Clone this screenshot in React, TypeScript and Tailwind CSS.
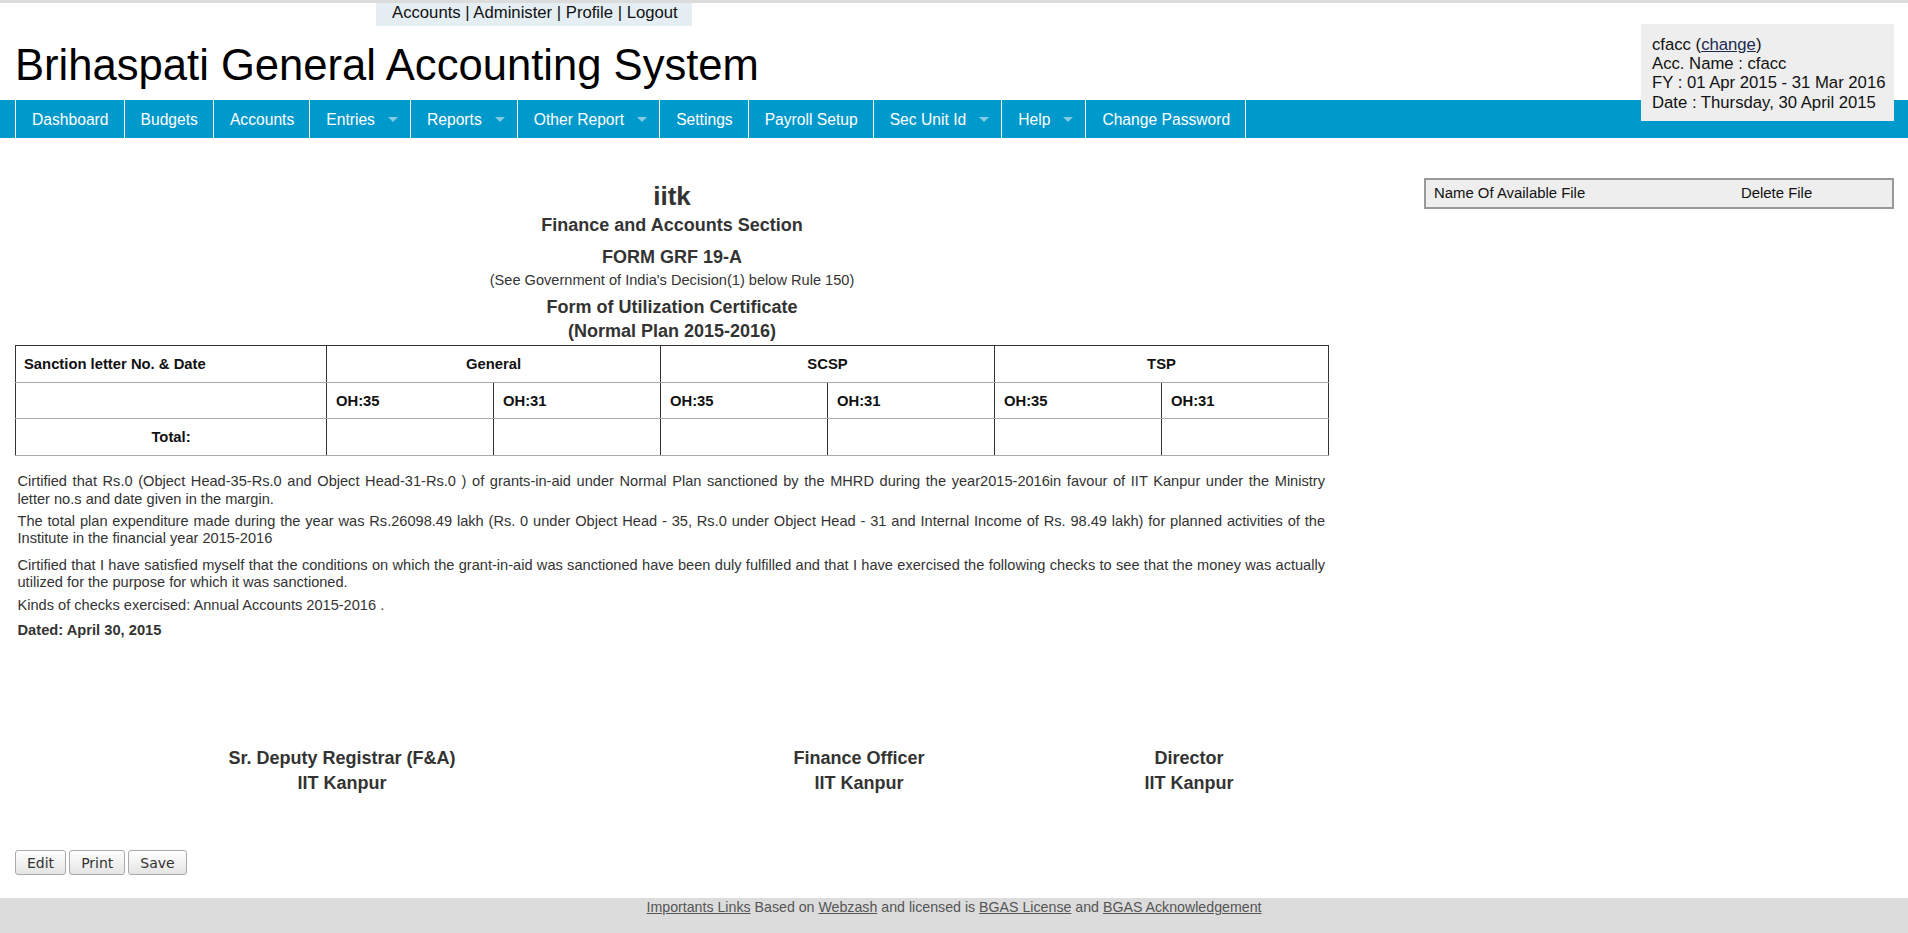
import React from "react";

const navItems: { label: string; arrow?: boolean }[] = [
  { label: "Dashboard" },
  { label: "Budgets" },
  { label: "Accounts" },
  { label: "Entries", arrow: true },
  { label: "Reports", arrow: true },
  { label: "Other Report", arrow: true },
  { label: "Settings" },
  { label: "Payroll Setup" },
  { label: "Sec Unit Id", arrow: true },
  { label: "Help", arrow: true },
  { label: "Change Password" },
];

const cellBase =
  "border border-x-[#333] border-y-[#aaa] h-[36.5px] p-0 align-middle font-bold text-[14.8px] text-[#111]";

export default function App() {
  return (
    <div
      className="relative w-[1908px] min-h-[933px] bg-white flex flex-col"
      style={{ fontFamily: '"Liberation Sans", Arial, sans-serif' }}
    >
      {/* top gray line */}
      <div className="h-[3px] bg-[#dcdcdc]" />

      {/* top links */}
      <div className="ml-[376px] w-[316px] h-[23px] bg-[#e5eef3] text-[16.7px] leading-[19.2px] pl-[16px] text-[#111]">
        Accounts | Administer | Profile | Logout
      </div>

      {/* title */}
      <div className="mt-[15px] ml-[15px] h-[49px] text-[43.6px] leading-[49px] text-black">
        Brihaspati General Accounting System
      </div>

      {/* nav */}
      <div className="mt-[10px] h-[38px] bg-[#0099cc] flex">
        <div className="ml-[15px] flex h-full border-r border-white">
          {navItems.map((it) => (
            <div
              key={it.label}
              className={`flex items-center h-full border-l border-white text-white text-[15.65px] pl-4 pt-[1px] ${
                it.arrow ? "pr-3" : "pr-[15px]"
              }`}
            >
              <span>{it.label}</span>
              {it.arrow && (
                <span className="ml-[13px] w-0 h-0 border-l-[5px] border-r-[5px] border-t-[5px] border-l-transparent border-r-transparent border-t-[#86cbe4]" />
              )}
            </div>
          ))}
        </div>
      </div>

      {/* user info box */}
      <div className="absolute top-[24px] right-[14px] w-[253px] bg-[#eeeeee] pt-[11px] pb-[9px] pl-[11px] text-[16.7px] leading-[19.2px] text-[#111]">
        <div>
          cfacc (<span className="underline text-[#1c2b4f]">change</span>)
        </div>
        <div>Acc. Name : cfacc</div>
        <div>FY : 01 Apr 2015 - 31 Mar 2016</div>
        <div>Date : Thursday, 30 April 2015</div>
      </div>

      {/* main */}
      <div className="flex">
        <div className="ml-[15px] w-[1314px] text-[#333]">
          <div className="pt-[43px] flex flex-col items-center font-bold">
            <div className="text-[26px] leading-[30px]">iitk</div>
            <div className="mt-[2px] text-[18px] leading-[24px]">Finance and Accounts Section</div>
            <div className="mt-[7.5px] text-[18px] leading-[24px]">FORM GRF 19-A</div>
            <div className="mt-[2.7px] text-[14.6px] leading-[18px] font-normal">
              (See Government of India's Decision(1) below Rule 150)
            </div>
            <div className="mt-[6.3px] text-[18px] leading-[24px]">Form of Utilization Certificate</div>
            <div className="text-[18px] leading-[24px]">(Normal Plan 2015-2016)</div>
          </div>

          <table className="mt-[2px] w-full border-collapse table-fixed">
            <colgroup>
              <col className="w-[311px]" />
              <col />
              <col />
              <col />
              <col />
              <col />
              <col />
            </colgroup>
            <tbody>
              <tr>
                <td className={`${cellBase} border-t-[#333] text-left pl-[8px]`}>Sanction letter No. &amp; Date</td>
                <td colSpan={2} className={`${cellBase} border-t-[#333] text-center`}>General</td>
                <td colSpan={2} className={`${cellBase} border-t-[#333] text-center`}>SCSP</td>
                <td colSpan={2} className={`${cellBase} border-t-[#333] text-center`}>TSP</td>
              </tr>
              <tr>
                <td className={cellBase}></td>
                {["OH:35", "OH:31", "OH:35", "OH:31", "OH:35", "OH:31"].map((t, i) => (
                  <td key={i} className={`${cellBase} text-left pl-[9px]`}>
                    {t}
                  </td>
                ))}
              </tr>
              <tr>
                <td className={`${cellBase} text-center`}>Total:</td>
                {[0, 1, 2, 3, 4, 5].map((i) => (
                  <td key={i} className={cellBase}></td>
                ))}
              </tr>
            </tbody>
          </table>

          <div className="pl-[2.5px] pr-[4px] text-[14.6px] leading-[17.2px] text-[#333] text-justify">
            <p className="mt-[17.5px]">
              Cirtified that Rs.0 (Object Head-35-Rs.0 and Object Head-31-Rs.0 ) of grants-in-aid under Normal Plan
              sanctioned by the MHRD during the year2015-2016in favour of IIT Kanpur under the Ministry{" "}
              <span className="whitespace-nowrap">letter no.s</span> and date given in the margin.
            </p>
            <p className="mt-[5px]">
              The total plan expenditure made during the year was Rs.26098.49 lakh (Rs. 0 under Object Head - 35, Rs.0
              under Object Head - 31 and Internal Income of Rs. 98.49 lakh) for planned activities of the Institute in
              the financial year 2015-2016
            </p>
            <p className="mt-[9.5px]">
              Cirtified that I have satisfied myself that the conditions on which the grant-in-aid was sanctioned have
              been duly fulfilled and that I have exercised the following checks to see that the money was actually
              utilized for the purpose for which it was sanctioned.
            </p>
            <p className="mt-[5.5px]">Kinds of checks exercised: Annual Accounts 2015-2016 .</p>
            <p className="mt-[8px] font-bold text-[14.7px]">Dated: April 30, 2015</p>
          </div>

          <div className="mt-[107px] flex text-[18px] leading-[25px] font-bold text-[#333] text-center">
            <div className="w-[654px]">
              <div>Sr. Deputy Registrar (F&amp;A)</div>
              <div>IIT Kanpur</div>
            </div>
            <div className="w-[380px]">
              <div>Finance Officer</div>
              <div>IIT Kanpur</div>
            </div>
            <div className="w-[280px]">
              <div>Director</div>
              <div>IIT Kanpur</div>
            </div>
          </div>

          <div
            className="mt-[54px] flex gap-[3px] text-[14px] text-[#333]"
            style={{ fontFamily: '"DejaVu Sans", sans-serif' }}
          >
            {["Edit", "Print", "Save"].map((b) => (
              <button
                key={b}
                className="h-[25px] px-[11px] border border-[#aaa] rounded-[3px] bg-gradient-to-b from-white to-[#e4e4e4] leading-[20px]"
              >
                {b}
              </button>
            ))}
          </div>
        </div>

        <div className="ml-[95px] w-[470px] mt-[40px]">
          <div className="h-[31px] border-2 border-[#999] bg-[#eeeeee] flex items-center text-[14.9px] text-[#111]">
            <div className="w-[315px] pl-[8px]">Name Of Available File</div>
            <div>Delete File</div>
          </div>
        </div>
      </div>

      {/* footer */}
      <div className="mt-[23px] h-[35px] bg-[#dcdcdc] text-center text-[14.2px] leading-[16.4px] pt-[1px] text-[#555]">
        <span className="underline">Importants Links</span> Based on <span className="underline">Webzash</span> and
        licensed is <span className="underline">BGAS License</span> and{" "}
        <span className="underline">BGAS Acknowledgement</span>
      </div>
    </div>
  );
}
